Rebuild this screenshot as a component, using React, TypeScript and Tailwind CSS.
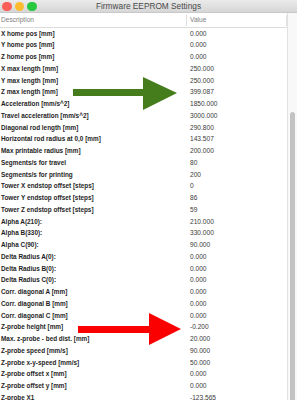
const rows: [string, string][] = [
  ["X home pos [mm]", "0.000"],
  ["Y home pos [mm]", "0.000"],
  ["Z home pos [mm]", "0.000"],
  ["X max length [mm]", "250.000"],
  ["Y max length [mm]", "250.000"],
  ["Z max length [mm]", "399.087"],
  ["Acceleration [mm/s^2]", "1850.000"],
  ["Travel acceleration [mm/s^2]", "3000.000"],
  ["Diagonal rod length [mm]", "290.800"],
  ["Horizontal rod radius at 0,0 [mm]", "143.507"],
  ["Max printable radius [mm]", "200.000"],
  ["Segments/s for travel", "80"],
  ["Segments/s for printing", "200"],
  ["Tower X endstop offset [steps]", "0"],
  ["Tower Y endstop offset [steps]", "86"],
  ["Tower Z endstop offset [steps]", "59"],
  ["Alpha A(210):", "210.000"],
  ["Alpha B(330):", "330.000"],
  ["Alpha C(90):", "90.000"],
  ["Delta Radius A(0):", "0.000"],
  ["Delta Radius B(0):", "0.000"],
  ["Delta Radius C(0):", "0.000"],
  ["Corr. diagonal A [mm]", "0.000"],
  ["Corr. diagonal B [mm]", "0.000"],
  ["Corr. diagonal C [mm]", "0.000"],
  ["Z-probe height [mm]", "-0.200"],
  ["Max. z-probe - bed dist. [mm]", "20.000"],
  ["Z-probe speed [mm/s]", "90.000"],
  ["Z-probe x-y-speed [mm/s]", "50.000"],
  ["Z-probe offset x [mm]", "0.000"],
  ["Z-probe offset y [mm]", "0.000"],
  ["Z-probe X1", "-123.565"],
];

export default function App() {
  return (
    <div className="relative h-[400px] w-[297px] overflow-hidden bg-white font-['Liberation_Sans',Arial,sans-serif]">
      {/* title bar */}
      <div className="relative flex h-[13px] items-center justify-center border-b border-[#c8c8c8] bg-gradient-to-b from-[#ebebeb] to-[#d6d6d6]">
        <div className="absolute left-[2px] top-[1.5px] flex gap-[3px]">
          <span className="h-[9.5px] w-[9.5px] rounded-full bg-[#fc5f57]" />
          <span className="h-[9.5px] w-[9.5px] rounded-full bg-[#fdbc2e]" />
          <span className="h-[9.5px] w-[9.5px] rounded-full bg-[#28c840]" />
        </div>
        <span className="text-[8.3px] leading-none text-[#4a4a4a]">Firmware EEPROM Settings</span>
      </div>

      <div className="flex">
        <div className="flex-1">
          {/* header */}
          <div className="flex h-[15px] items-center border-b border-[#dcdcdc] text-[6.6px] text-[#808080]">
            <div className="w-[186px] pl-[1px]">Description</div>
            <div className="h-[11px] w-px bg-[#e0e0e0]" />
            <div className="flex-1 pl-[3px]">Value</div>
            <div className="h-[11px] w-px bg-[#e0e0e0]" />
          </div>
          {rows.map(([d, v]) => (
            <div key={d} className="flex h-[11.76px] items-center text-[6.4px] leading-none">
              <div className="w-[190px] whitespace-nowrap pl-[1px] font-bold text-[#1e1e1e]">{d}</div>
              <div className="flex-1 text-[6.6px] text-[#3a3a3a]">{v}</div>
            </div>
          ))}
        </div>
        {/* scrollbar */}
        <div className="flex w-[10px] flex-col border-l border-[#e2e2e2] bg-[#f8f8f8] px-[2px]">
          <div className="h-[99px]" />
          <div className="flex-1 rounded-full bg-[#c3c3c3]" />
        </div>
      </div>

      {/* annotation arrows */}
      <svg className="pointer-events-none absolute left-0 top-0" width="297" height="400">
        <polygon points="73,89 143,89 143,77 177,93 143,110 143,96 73,96" fill="#467d1c" />
        <polygon points="78,326 149,326 149,313 181,329 149,345 149,333 78,333" fill="#fb0000" />
      </svg>
    </div>
  );
}
